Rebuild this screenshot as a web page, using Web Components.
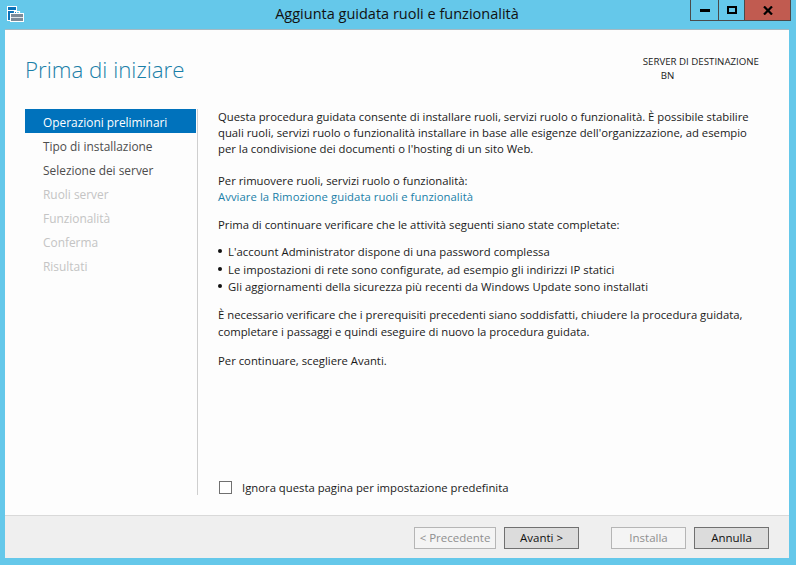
<!DOCTYPE html>
<html lang="it">
<head>
<meta charset="utf-8">
<title>Aggiunta guidata ruoli e funzionalità</title>
<style>
    html, body { margin: 0; padding: 0; }
    body { font-family: "Open Sans", "Noto Sans", sans-serif; }
</style>
</head>
<body>
<wizard-window>
    <wizard-nav slot="nav">
        <nav-item selected>Operazioni preliminari</nav-item>
        <nav-item>Tipo di installazione</nav-item>
        <nav-item>Selezione dei server</nav-item>
        <nav-item disabled>Ruoli server</nav-item>
        <nav-item disabled>Funzionalità</nav-item>
        <nav-item disabled>Conferma</nav-item>
        <nav-item disabled>Risultati</nav-item>
    </wizard-nav>
    <wizard-content slot="content"></wizard-content>
    <wizard-button slot="buttons" disabled wide style="margin-right:8px">&lt; Precedente</wizard-button>
    <wizard-button slot="buttons" style="margin-right:32px">Avanti &gt;</wizard-button>
    <wizard-button slot="buttons" disabled style="margin-right:8px">Installa</wizard-button>
    <wizard-button slot="buttons">Annulla</wizard-button>
</wizard-window>

<script>
class WizardWindow extends HTMLElement {
    connectedCallback() {
        this.attachShadow({ mode: 'open' });
        this.shadowRoot.innerHTML = `
            <style>
                :host {
                    display: flex;
                    flex-direction: column;
                    width: 796px;
                    height: 565px;
                    background-color: #65c8ea;
                    overflow: hidden;
                    font-size: 11.3px;
                    color: #1a1a1a;
                }
                .titlebar {
                    display: flex;
                    height: 29px;
                    flex: none;
                    align-items: flex-start;
                }
                .app-icon {
                    width: 17px;
                    height: 16px;
                    flex: none;
                    margin: 6px 0 0 7px;
                }
                .title {
                    flex: 1;
                    text-align: center;
                    font-size: 14.5px;
                    line-height: 28px;
                    color: #111;
                    padding-left: 80px;
                }
                .controls {
                    display: flex;
                    flex: none;
                    height: 20px;
                    margin-right: 5px;
                    border: 1px solid #4a4a4a;
                    border-top: none;
                }
                .controls div {
                    display: flex;
                    align-items: center;
                    justify-content: center;
                    width: 27px;
                }
                .controls div + div { border-left: 1px solid #4a4a4a; }
                .controls .max { width: 25px; }
                .controls .close { width: 45px; background-color: #c15b50; }
                .client {
                    flex: none;
                    display: flex;
                    flex-direction: column;
                    width: 784px;
                    height: 529px;
                    margin-left: 5px;
                    background-color: #fdfdfd;
                    border-top: 1px solid #a5b9c2;
                    box-sizing: border-box;
                }
                .head {
                    flex: none;
                    display: flex;
                    justify-content: space-between;
                    height: 79px;
                    padding: 0 30px 0 20px;
                }
                h1 {
                    margin: 22px 0 0;
                    font-size: 22.3px;
                    font-weight: 300;
                    line-height: 35px;
                    color: #1a7fa8;
                }
                .dest {
                    margin-top: 25px;
                    font-size: 9.7px;
                    line-height: 13.5px;
                }
                .dest span { display: block; padding-left: 18px; }
                .main {
                    flex: 1;
                    display: flex;
                    min-height: 0;
                    padding: 0 0 20px 20px;
                }
                .foot {
                    flex: none;
                    display: flex;
                    align-items: center;
                    box-sizing: border-box;
                    height: 43px;
                    padding: 1px 20px 0 409px;
                    background-color: #efefef;
                    border-top: 1px solid #d9d9d9;
                }
            </style>
            <div class="titlebar">
                <svg class="app-icon" viewBox="0 0 17 16">
                    <rect x="0" y="0" width="10" height="15" fill="#fff"/>
                    <rect x="1" y="1" width="8" height="3" fill="#0a72b8"/>
                    <rect x="1" y="5" width="8" height="9" fill="#0a72b8"/>
                    <rect x="3" y="7" width="14" height="9" fill="#fff"/>
                    <path d="M7.5 7V5.5h5V7" fill="none" stroke="#fff" stroke-width="1.2"/>
                    <rect x="4" y="8" width="12" height="7" fill="#7c8b99"/>
                    <rect x="4" y="11" width="12" height="1" fill="#dfe5ea"/>
                </svg>
                <div class="title">Aggiunta guidata ruoli e funzionalità</div>
                <div class="controls">
                    <div><svg width="10" height="3"><rect width="10" height="3" fill="#000"/></svg></div>
                    <div class="max"><svg width="10" height="8"><rect x="1" y="1" width="8" height="6" fill="none" stroke="#000" stroke-width="2"/></svg></div>
                    <div class="close"><svg width="10" height="9" viewBox="0 0 10 9"><path d="M1 .5 9 8.5M9 .5 1 8.5" stroke="#000" stroke-width="2.2" fill="none"/></svg></div>
                </div>
            </div>
            <div class="client">
                <div class="head">
                    <h1>Prima di iniziare</h1>
                    <div class="dest">SERVER DI DESTINAZIONE<span>BN</span></div>
                </div>
                <div class="main">
                    <slot name="nav"></slot>
                    <slot name="content"></slot>
                </div>
                <div class="foot"><slot name="buttons"></slot></div>
            </div>
        `;
    }
}
customElements.define('wizard-window', WizardWindow);

class WizardNav extends HTMLElement {
    connectedCallback() {
        this.attachShadow({ mode: 'open' });
        this.shadowRoot.innerHTML = `
            <style>
                :host {
                    display: flex;
                    flex-direction: column;
                    flex: none;
                    box-sizing: border-box;
                    width: 173px;
                    border-right: 1px solid #cfcfcf;
                    padding-right: 1px;
                }
            </style>
            <slot></slot>
        `;
    }
}
customElements.define('wizard-nav', WizardNav);

class NavItem extends HTMLElement {
    connectedCallback() {
        this.attachShadow({ mode: 'open' });
        this.shadowRoot.innerHTML = `
            <style>
                :host {
                    display: block;
                    height: 24px;
                    line-height: 27px;
                    padding-left: 18px;
                    font-size: 11.9px;
                    color: #4d4d4d;
                }
                :host([selected]) { background-color: #0072bc; color: #fff; }
                :host([disabled]) { color: #c4c4c4; }
            </style>
            <slot></slot>
        `;
    }
}
customElements.define('nav-item', NavItem);

class WizardContent extends HTMLElement {
    connectedCallback() {
        this.attachShadow({ mode: 'open' });
        this.shadowRoot.innerHTML = `
            <style>
                :host {
                    display: flex;
                    flex-direction: column;
                    flex: 1;
                    min-width: 0;
                    padding: 0 20px;
                    line-height: 16px;
                    white-space: nowrap;
                    color: #1a1a1a;
                }
                p { margin: 0; }
                .intro { margin-bottom: 16px; }
                a { color: #1a7fa8; text-decoration: none; letter-spacing: 0.06px; }
                .links { margin-bottom: 12px; }
                ul { list-style: none; margin: 11px 0 9px; padding: 0; letter-spacing: 0.04px; }
                li { position: relative; padding-left: 10px; height: 17.5px; }
                li::before {
                    content: '';
                    position: absolute;
                    left: 0;
                    top: 5px;
                    width: 4px;
                    height: 4px;
                    border-radius: 50%;
                    background-color: #111;
                }
                .check { line-height: 17px; }
                .last { margin-top: 13px; }
                .skip {
                    display: flex;
                    align-items: center;
                    gap: 10px;
                    margin-top: auto;
                    padding-left: 1px;
                }
                .skip span:last-child { position: relative; top: 1px; }
                .box {
                    width: 11px;
                    height: 11px;
                    background-color: #fff;
                    border: 1px solid #707070;
                }
            </style>
            <p class="intro">Questa procedura guidata consente di installare ruoli, servizi ruolo o funzionalità. È possibile stabilire<br>quali ruoli, servizi ruolo o funzionalità installare in base alle esigenze dell'organizzazione, ad esempio<br>per la condivisione dei documenti o l'hosting di un sito Web.</p>
            <p class="links">Per rimuovere ruoli, servizi ruolo o funzionalità:<br><a href="#">Avviare la Rimozione guidata ruoli e funzionalità</a></p>
            <p>Prima di continuare verificare che le attività seguenti siano state completate:</p>
            <ul>
                <li>L'account Administrator dispone di una password complessa</li>
                <li>Le impostazioni di rete sono configurate, ad esempio gli indirizzi IP statici</li>
                <li>Gli aggiornamenti della sicurezza più recenti da Windows Update sono installati</li>
            </ul>
            <p class="check">È necessario verificare che i prerequisiti precedenti siano soddisfatti, chiudere la procedura guidata,<br>completare i passaggi e quindi eseguire di nuovo la procedura guidata.</p>
            <p class="last">Per continuare, scegliere Avanti.</p>
            <div class="skip"><span class="box"></span><span>Ignora questa pagina per impostazione predefinita</span></div>
        `;
    }
}
customElements.define('wizard-content', WizardContent);

class WizardButton extends HTMLElement {
    connectedCallback() {
        this.attachShadow({ mode: 'open' });
        this.shadowRoot.innerHTML = `
            <style>
                :host {
                    display: flex;
                    align-items: center;
                    justify-content: center;
                    box-sizing: border-box;
                    flex: none;
                    width: 75px;
                    height: 22px;
                    background-color: #dcdcdc;
                    border: 1px solid #707070;
                    font-size: 11.5px;
                    color: #111;
                }
                :host([disabled]) {
                    background-color: #f4f4f4;
                    border-color: #b5b5b5;
                    color: #8f8f8f;
                }
                :host([wide]) { width: 82px; }
            </style>
            <slot></slot>
        `;
    }
}
customElements.define('wizard-button', WizardButton);
</script>
</body>
</html>
